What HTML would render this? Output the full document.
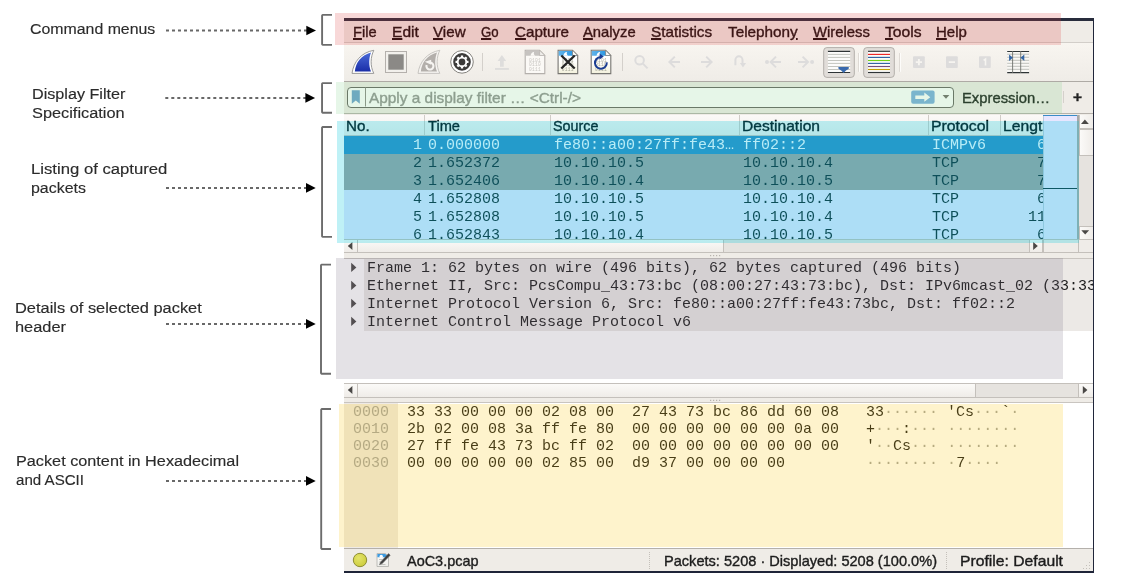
<!DOCTYPE html>
<html lang="en"><head><meta charset="utf-8"><title>Wireshark main window - annotated</title>
<style>
html,body{margin:0;padding:0;background:#fff;}
body{width:1121px;height:587px;position:relative;overflow:hidden;font-family:"Liberation Sans","DejaVu Sans",sans-serif;}
.a{position:absolute;}
.t{position:absolute;white-space:pre;transform-origin:0 50%;-webkit-text-stroke:0.380px currentColor;}
.t u{text-decoration:underline;text-decoration-thickness:1.500px;text-underline-offset:1.300px;}
#win{position:absolute;left:344px;top:18px;width:749px;height:550.300px;background:#efece7;border-top:3px solid #282c3c;border-right:1px solid #20263a;border-bottom:2px solid #1e2438;box-sizing:content-box;}
/* everything below uses page coordinates */
#menubar{left:344px;top:21px;width:749px;height:21px;background:#efece7;border-bottom:1px solid #d2cec9;}
#toolbar{left:344px;top:43px;width:749px;height:38px;background:linear-gradient(#f8f5f0,#efece7);border-bottom:1px solid #aeaaa5;}
#filterbar{left:344px;top:82px;width:749px;height:31px;background:#efece7;border-bottom:1.500px solid #b6b2ac;}
#finput{left:347px;top:87px;width:604.500px;height:18.700px;background:#fff;border:1px solid #65635f;border-radius:4px;}
#plist{left:344px;top:115px;width:699px;height:124px;background:#fff;overflow:hidden;}
#phead{left:344px;top:114.500px;width:699px;height:20.500px;background:linear-gradient(#fbf9f7,#f3f0ec);border-bottom:1px solid #c9c5c0;}
.colsep{position:absolute;top:115px;width:1px;height:20px;background:#d0ccc7;}
.row{position:absolute;left:344px;width:699px;height:18px;overflow:hidden;font-family:"Liberation Mono","DejaVu Sans Mono",monospace;font-size:15px;line-height:18px;white-space:pre;}
.row.sel{background:#308cc6;color:#f4f8ff;}
.row.g{background:#a0a0a0;color:#12272e;}
.row.b{background:#e7e6ff;color:#12272e;}
.row .c{position:absolute;top:1.800px;}
.row .no{right:621px;text-align:right;}
.row .tm{left:84px;}
.row .src{left:210px;}
.row .dst{left:399px;}
.row .pr{left:588px;}
.row .ln{right:-12px;text-align:right;}
.sb{position:absolute;background:#e6e3df;}
.btn{position:absolute;background:linear-gradient(90deg,#fbfaf8,#efece8);border:1px solid #c4c0bb;box-sizing:border-box;}
.btnh{position:absolute;background:linear-gradient(#fbfaf8,#efece8);border:1px solid #c4c0bb;box-sizing:border-box;}
.mono{font-family:"Liberation Mono","DejaVu Sans Mono",monospace;font-size:15px;white-space:pre;position:absolute;}
.ov{position:absolute;pointer-events:none;}
.mono i{font-style:normal;color:#a6a6a0;}
</style></head>
<body><div id="gl" style="position:absolute;left:0;top:0;width:1121px;height:587px;will-change:transform;">

<div id="win"></div>
<div class="a" id="menubar"></div>
<div class="a" id="toolbar"></div>
<!-- toolbar icons -->
<svg class="a" style="left:344px;top:43px" width="749" height="39" viewBox="344 43 749 39">
 <defs>
  <linearGradient id="fin" x1="0" y1="0" x2="0" y2="1"><stop offset="0" stop-color="#4a6ad8"/><stop offset="1" stop-color="#1a2ea8"/></linearGradient>
  <linearGradient id="pg" x1="0" y1="0" x2="0" y2="1"><stop offset="0" stop-color="#ffffff"/><stop offset="0.45" stop-color="#ffffff"/><stop offset="1" stop-color="#f3f1dc"/></linearGradient>
  <linearGradient id="hb" x1="0" y1="0" x2="1" y2="0"><stop offset="0" stop-color="#62b4ea"/><stop offset="1" stop-color="#1a8ee0"/></linearGradient>
 </defs>
 <!-- start capture (shark fin) -->
 <path d="M352 73.400 C353.500 62 361 52.500 373.800 50.300 C370.500 57 370 66 373.800 73.400 Z" fill="#fff" stroke="#8e8e8e" stroke-width="0.9"/>
 <path d="M354.800 71.500 C355.700 62 361.500 55 371 52.400 C368.800 58 368.500 65.500 371 71.500 Z" fill="url(#fin)"/>
 <!-- stop -->
 <rect x="385.5" y="51.5" width="21" height="21" fill="#f2f0ec" stroke="#b4b0ac" stroke-width="1"/>
 <rect x="388.3" y="54.3" width="15.4" height="15.4" fill="#8b8986"/>
 <!-- restart fin (disabled) -->
 <path d="M418 73.400 C419.500 62 427 52.500 439.800 50.300 C436.500 57 436 66 439.800 73.400 Z" fill="#f6f4f1" stroke="#c2bfbb" stroke-width="0.9"/>
 <path d="M420.800 71.500 C421.700 62 427.500 55 437 52.400 C434.800 58 434.500 65.500 437 71.500 Z" fill="#b3afab"/>
 <path d="M430.600 62.600 A3.500 3.500 0 1 1 426.600 65" fill="none" stroke="#f6f4f1" stroke-width="2.100"/>
 <path d="M424.800 61.800 L431.200 59.800 L431.200 64.800 Z" fill="#f6f4f1"/>
 <!-- options gear -->
 <circle cx="462" cy="61.900" r="11.300" fill="#fff" stroke="#77756f" stroke-width="0.9"/>
 <circle cx="462" cy="61.900" r="8.800" fill="#3c3b3a"/>
 <g fill="none" stroke="#fff">
  <circle cx="462" cy="61.900" r="4.300" stroke-width="1.900"/>
  <g stroke-width="2.300">
   <path d="M462 55.400v1.800M462 66.600v1.800M455.500 61.900h1.800M466.700 61.900h1.800M457.400 57.300l1.300 1.300M465.300 65.200l1.300 1.300M457.400 66.500l1.300-1.300M465.300 58.600l1.300-1.300"/>
  </g>
 </g>
 <!-- separator -->
 <rect x="482" y="53" width="1" height="18" fill="#d4d0cb"/>
 <!-- upload (disabled) -->
 <g fill="#dedddc">
  <path d="M501.900 55.100 L506.200 60.900 H503.750 V66.700 H500 V60.900 H497.600 Z"/>
  <rect x="495" y="68" width="13.900" height="1.900"/>
 </g>
 <!-- file icon 1 (disabled) -->
 <g>
  <path d="M525.20 50.3 H539.60 L544.80 55.50 V73.6 H525.20 Z" fill="#fbf9f6" stroke="#b4b0ac" stroke-width="1.1"/>
  <path d="M525.80 50.90 H539.40 L544.20 55.70 H525.80 Z" fill="#c6c3c0"/>
  <path d="M539.60 50.3 V55.50 H544.80 Z" fill="#efedea" stroke="#b4b0ac" stroke-width="0.7"/>
  <path d="M530.50 55.700 C530.90 53.400 532.10 52.300 534.20 51.700 C533.50 53 533.70 54.600 535.10 55.700 Z" fill="#fbf9f6"/>
  <g fill="#c8c5c1" font-family="Liberation Mono, monospace" font-size="4.600" letter-spacing="0.250">
   <text x="528.90" y="61.900">0101</text><text x="528.90" y="66.400">0110</text><text x="528.90" y="70.900">0111</text>
  </g>
 </g>
 <!-- file icon 2 (close) -->
 <g>
  <path d="M558.10 50.3 H572.50 L577.70 55.50 V73.6 H558.10 Z" fill="url(#pg)" stroke="#777672" stroke-width="1.1"/>
  <path d="M558.70 50.90 H572.30 L577.10 55.70 H558.70 Z" fill="url(#hb)"/>
  <path d="M572.50 50.3 V55.50 H577.70 Z" fill="#fbfbf8" stroke="#777672" stroke-width="0.7"/>
  <path d="M563.40 55.700 C563.80 53.400 565.00 52.300 567.10 51.700 C566.40 53 566.60 54.600 568.00 55.700 Z" fill="#ffffff"/>
  <g fill="#a9a99a" font-family="Liberation Mono, monospace" font-size="4.600" letter-spacing="0.250">
   <text x="561.80" y="61.900">0101</text><text x="561.80" y="66.400">0110</text><text x="561.80" y="70.900">0111</text>
  </g>
  <path d="M561.30 55.500 L574.70 68.500 M574.70 55.500 L561.30 68.500" stroke="#252525" stroke-width="2.300" fill="none"/>
 </g>
 <!-- file icon 3 (reload) -->
 <g>
  <path d="M591.20 50.3 H605.60 L610.80 55.50 V73.6 H591.20 Z" fill="url(#pg)" stroke="#777672" stroke-width="1.1"/>
  <path d="M591.80 50.90 H605.40 L610.20 55.70 H591.80 Z" fill="url(#hb)"/>
  <path d="M605.60 50.3 V55.50 H610.80 Z" fill="#fbfbf8" stroke="#777672" stroke-width="0.7"/>
  <path d="M596.50 55.700 C596.90 53.400 598.10 52.300 600.20 51.700 C599.50 53 599.70 54.600 601.10 55.700 Z" fill="#ffffff"/>
  <g fill="#a9a99a" font-family="Liberation Mono, monospace" font-size="4.600" letter-spacing="0.250">
   <text x="594.90" y="61.900">0101</text><text x="594.90" y="66.400">0110</text><text x="594.90" y="70.900">0111</text>
  </g>
  <path d="M606.75 62.400 A5.900 5.900 0 1 1 600.55 57" fill="none" stroke="#1b3d92" stroke-width="2"/>
  <path d="M599.65 53.500 L603.75 56.500 L599.65 59.400 Z" fill="#1b3d92"/>
 </g>
 <rect x="622" y="53" width="1" height="18" fill="#d4d0cb"/>
 <!-- search (disabled) -->
 <g fill="none" stroke="#dddcdc" stroke-width="2">
  <circle cx="639.600" cy="60.200" r="4.300"/><path d="M642.900 63.600 l4.700 4.800"/>
 </g>
 <!-- arrows (disabled) -->
 <g fill="none" stroke="#dddcdc" stroke-width="2" stroke-linejoin="miter">
  <path d="M680 62 h-10.200 M674.800 56.600 l-5.400 5.400 l5.400 5.400"/>
  <path d="M701 62 h10.200 M706.200 56.600 l5.400 5.400 l-5.400 5.400"/>
  <path d="M735.400 65.200 V59.900 a3.550 3.550 0 0 1 7.100 0 V63.500"/>
  <path d="M781 62 h-9.400 M776 56.600 l-5.400 5.400 l5.400 5.400"/>
  <path d="M798 62 h9.400 M802.600 56.600 l5.400 5.400 l-5.400 5.400"/>
 </g>
 <path d="M739.900 62.900 h6.200 l-3.100 4.600 z" fill="#dddcdc"/>
 <circle cx="767" cy="62" r="2" fill="#dddcdc"/><circle cx="812.100" cy="62" r="2" fill="#dddcdc"/>
 <!-- toggle button 1: autoscroll -->
 <rect x="823.700" y="47.600" width="30.600" height="29.800" rx="3.200" fill="#e1ddd9" stroke="#b3afaa" stroke-width="1"/>
 <rect x="827.900" y="50.800" width="22.300" height="22.200" fill="#fcfcfb"/>
 <g stroke="#c3c5bf" stroke-width="1"><path d="M827.900 54.4H850.200"/><path d="M827.900 57.4H850.200"/><path d="M827.900 60.5H850.200"/><path d="M827.900 63.4H850.200"/><path d="M827.900 66.5H850.200"/><path d="M827.900 69.5H850.200"/></g>
 <path d="M827.900 51.300H850.200M827.900 72.500H850.200" stroke="#2e3436" stroke-width="1.200"/>
 <path d="M838.100 68 Q838.100 67 839.300 67 H847.900 Q849.100 67 849.100 68 Q848.500 69.400 846 70.600 L843.600 73 L841.200 70.600 Q838.700 69.400 838.100 68 Z" fill="#3869ad"/>
 <rect x="859" y="53" width="1" height="18.800" fill="#fdfcfa"/><rect x="858" y="53" width="1" height="18.800" fill="#dedad5"/>
 <!-- toggle button 2: colorize -->
 <rect x="863.700" y="47.600" width="30.600" height="29.800" rx="3.200" fill="#e1ddd9" stroke="#b3afaa" stroke-width="1"/>
 <rect x="868" y="50.800" width="22" height="22.200" fill="#fcfcfb"/>
 <g stroke-width="1.150">
  <path d="M868 51.300H890" stroke="#2e3436"/><path d="M868 54.400H890" stroke="#ef2929"/><path d="M868 57.400H890" stroke="#3465a4"/>
  <path d="M868 60.500H890" stroke="#73d216"/><path d="M868 63.400H890" stroke="#3465a4"/><path d="M868 66.500H890" stroke="#75507b"/>
  <path d="M868 69.500H890" stroke="#c4a000"/><path d="M868 72.500H890" stroke="#2e3436"/>
 </g>
 <rect x="899" y="53" width="1" height="18.800" fill="#dedad5"/><rect x="900" y="53" width="1" height="18.800" fill="#fdfcfa"/>
 <!-- zoom buttons disabled -->
 <g fill="#dddcdc">
  <rect x="913" y="56.2" width="11.800" height="11.800" rx="1"/><rect x="946" y="56.2" width="11.800" height="11.800" rx="1"/><rect x="979" y="56.2" width="11.800" height="11.800" rx="1"/>
 </g>
 <g stroke="#f6f4f0" stroke-width="1.9" fill="none"><path d="M915.800 62.100h6.200M918.900 59v6.200M948.800 62.100h6.200"/><path d="M983.600 60.300l1.900-1.300v6.400" stroke-width="1.6"/></g>
 <!-- resize columns -->
 <g>
  <rect x="1007.200" y="51" width="21.900" height="22" fill="#f9f8f5"/>
  <g stroke="#b9bbb5" stroke-width="0.900"><path d="M1007.200 54.2H1029.100"/><path d="M1007.200 57.25H1029.100"/><path d="M1007.200 60.3H1029.100"/><path d="M1007.200 63.3H1029.100"/><path d="M1007.200 66.3H1029.100"/><path d="M1007.200 69.3H1029.100"/></g>
  <path d="M1007.200 51.500H1029.100M1007.200 72.600H1029.100" stroke="#2e3436" stroke-width="1.100"/>
  <path d="M1012.600 51v22M1020.700 51v22" stroke="#6e706c" stroke-width="0.900"/>
  <path d="M1009.100 54.600 l3.800 3.200 l-3.800 3.200 z M1024.300 54.600 l-3.800 3.200 l3.800 3.200z" fill="#3465a4"/>
   </g>
</svg>
<div class="a" id="filterbar"></div>
<div class="a" id="finput"></div>
<svg class="a" style="left:344px;top:82px" width="749" height="33" viewBox="344 82 749 33">
 <path d="M351.800 90.300 h8 v13.400 l-4 -3.300 l-4 3.300 z" fill="#6ba0cc"/>
 <rect x="365" y="87.500" width="1" height="19" fill="#8c8a86"/>
 <rect x="911.200" y="90.500" width="23.400" height="13.300" rx="2" fill="#78aede"/>
 <path d="M915.300 95.400 h9 v-2.800 l6 4.600 l-6 4.600 v-2.800 h-9 z" fill="#fff"/>
 <path d="M942.600 95 h6.800 l-3.400 3.800 z" fill="#6e6c68"/>
 <rect x="1063" y="91" width="1" height="12" fill="#d4d0cb"/>
</svg>
<!-- packet list -->
<div class="a" id="plist"></div>
<div class="a" id="phead"></div>
<div class="colsep" style="left:424px"></div><div class="colsep" style="left:550px"></div><div class="colsep" style="left:739px"></div><div class="colsep" style="left:928px"></div><div class="colsep" style="left:1000px"></div>

<div class="row sel" style="top:135.5px"><span class="c no">1</span><span class="c tm">0.000000</span><span class="c src">fe80::a00:27ff:fe43…</span><span class="c dst">ff02::2</span><span class="c pr">ICMPv6</span><span class="c ln">62</span></div>
<div class="row g" style="top:153.5px"><span class="c no">2</span><span class="c tm">1.652372</span><span class="c src">10.10.10.5</span><span class="c dst">10.10.10.4</span><span class="c pr">TCP</span><span class="c ln">74</span></div>
<div class="row g" style="top:171.5px"><span class="c no">3</span><span class="c tm">1.652406</span><span class="c src">10.10.10.4</span><span class="c dst">10.10.10.5</span><span class="c pr">TCP</span><span class="c ln">74</span></div>
<div class="row b" style="top:189.5px"><span class="c no">4</span><span class="c tm">1.652808</span><span class="c src">10.10.10.5</span><span class="c dst">10.10.10.4</span><span class="c pr">TCP</span><span class="c ln">66</span></div>
<div class="row b" style="top:207.5px"><span class="c no">5</span><span class="c tm">1.652808</span><span class="c src">10.10.10.5</span><span class="c dst">10.10.10.4</span><span class="c pr">TCP</span><span class="c ln">117</span></div>
<div class="row b" style="top:225.5px"><span class="c no">6</span><span class="c tm">1.652843</span><span class="c src">10.10.10.4</span><span class="c dst">10.10.10.5</span><span class="c pr">TCP</span><span class="c ln">66</span></div>
<!-- minimap -->
<div class="a" style="left:1043px;top:115px;width:35px;height:124px;background:#e7e6ff;"></div>
<div class="a" style="left:1043px;top:114.800px;width:34px;height:1.400px;background:#3a8cc8;"></div>
<div class="a" style="left:1042.500px;top:116px;width:1px;height:123px;background:rgba(60,120,130,0.25);"></div>
<div class="a" style="left:1077px;top:115px;width:1.500px;height:124px;background:#a8a8a8;"></div>
<div class="a" style="left:1043px;top:188px;width:34px;height:1px;background:#12333c;"></div>
<!-- v scrollbar of packet list -->
<div class="sb" style="left:1078.500px;top:115px;width:14.500px;height:125px;"></div>
<div class="btn" style="left:1078.500px;top:115px;width:14.500px;height:14px;border-top:none;border-right:none;"></div>
<div class="btn" style="left:1078.500px;top:128.500px;width:14.500px;height:27px;border-right:none;"></div>
<div class="btn" style="left:1078.500px;top:225.500px;width:14.500px;height:14px;border-right:none;"></div>
<!-- h scrollbar of packet list -->
<div class="sb" style="left:344px;top:239px;width:749px;height:14.300px;border-top:1px solid #c4c0bb;border-bottom:1px solid #c4c0bb;box-sizing:border-box;"></div>
<div class="btnh" style="left:344px;top:239px;width:13.500px;height:14.300px;border-left:none;"></div>
<div class="btnh" style="left:357px;top:239px;width:366.500px;height:14.300px;"></div>
<div class="btnh" style="left:1028.500px;top:239px;width:14.500px;height:14.300px;"></div>
<div class="a" style="left:1043px;top:239px;width:35.500px;height:14.300px;background:#efece8;border:1px solid #c4c0bb;box-sizing:border-box;"></div>
<div class="a" style="left:1078px;top:239px;width:15px;height:14.300px;background:#efece8;border:1px solid #c4c0bb;border-right:none;box-sizing:border-box;"></div>
<!-- splitter 1 -->
<div class="a" style="left:344px;top:253px;width:749px;height:5px;background:#efece7;"></div>
<!-- details pane -->
<div class="a" style="left:344px;top:258px;width:749px;height:125px;background:#fff;border-top:1px solid #c9c5c0;box-sizing:border-box;"></div>
<div class="a" style="left:364px;top:259px;width:729px;height:72px;background:#ece9e6;"></div>
<div class="mono" style="left:344px;top:260.400px;width:749px;height:72px;line-height:18px;color:#1c1c1c;overflow:hidden;">
<span class="a" style="left:23px;top:0">Frame 1: 62 bytes on wire (496 bits), 62 bytes captured (496 bits)</span>
<span class="a" style="left:23px;top:18px">Ethernet II, Src: PcsCompu_43:73:bc (08:00:27:43:73:bc), Dst: IPv6mcast_02 (33:33:00:00:00:02)</span>
<span class="a" style="left:23px;top:36px">Internet Protocol Version 6, Src: fe80::a00:27ff:fe43:73bc, Dst: ff02::2</span>
<span class="a" style="left:23px;top:54px">Internet Control Message Protocol v6</span>
</div>
<!-- h scrollbar of details -->
<div class="sb" style="left:344px;top:383px;width:749px;height:14.500px;border-top:1px solid #c4c0bb;border-bottom:1px solid #c4c0bb;box-sizing:border-box;"></div>
<div class="btnh" style="left:344px;top:383px;width:13.500px;height:14.500px;border-left:none;"></div>
<div class="btnh" style="left:357px;top:383px;width:618.500px;height:14.500px;"></div>
<div class="btnh" style="left:1078px;top:383px;width:15px;height:14.500px;border-right:none;"></div>
<!-- splitter 2 -->
<div class="a" style="left:344px;top:397.500px;width:749px;height:6px;background:#efece7;"></div>
<!-- hex pane -->
<div class="a" style="left:344px;top:402px;width:749px;height:147px;background:#fff;border-top:1px solid #c9c5c0;border-bottom:1px solid #b4b0ab;box-sizing:border-box;"></div>
<div class="a" style="left:344px;top:403px;width:54px;height:145px;background:#eeeae6;"></div>
<div class="mono" style="left:344px;top:403.800px;width:749px;height:70px;line-height:17px;color:#1c1c1c;">
<span class="a" style="left:9px;top:0;color:#a4a4a4">0000</span><span class="a" style="left:63px;top:0">33 33 00 00 00 02 08 00  27 43 73 bc 86 dd 60 08   33<i>······</i> 'Cs<i>···</i>`<i>·</i></span>
<span class="a" style="left:9px;top:17px;color:#a4a4a4">0010</span><span class="a" style="left:63px;top:17px">2b 02 00 08 3a ff fe 80  00 00 00 00 00 00 0a 00   +<i>···</i>:<i>···</i> <i>········</i></span>
<span class="a" style="left:9px;top:34px;color:#a4a4a4">0020</span><span class="a" style="left:63px;top:34px">27 ff fe 43 73 bc ff 02  00 00 00 00 00 00 00 00   '<i>··</i>Cs<i>···</i> <i>········</i></span>
<span class="a" style="left:9px;top:51px;color:#a4a4a4">0030</span><span class="a" style="left:63px;top:51px">00 00 00 00 00 02 85 00  d9 37 00 00 00 00         <i>········</i> <i>·</i>7<i>····</i></span>
</div>
<!-- status bar -->
<div class="a" style="left:344px;top:549px;width:749px;height:22px;background:#efece7;"></div>
<svg class="a" style="left:344px;top:115px" width="749" height="458" viewBox="344 115 749 458">
 <defs><radialGradient id="yl" cx="0.4" cy="0.35" r="0.7"><stop offset="0" stop-color="#e4e46a"/><stop offset="1" stop-color="#cccc3c"/></radialGradient>
 <linearGradient id="pg2" x1="0" y1="0" x2="0" y2="1"><stop offset="0" stop-color="#ffffff"/><stop offset="1" stop-color="#eeeeea"/></linearGradient></defs>
 <!-- scroll arrows -->
 <g fill="#4a4846">
  <path d="M1081 124 h7.800 l-3.900 -4.400 z"/>
  <path d="M1081.300 230.200 h7.800 l-3.900 4.300 z"/>
  <path d="M352.400 242 v8 l-4.600 -4 z"/>
  <path d="M1033.200 242 v8 l4.600 -4 z"/>
  <path d="M352.400 386 v8 l-4.600 -4 z"/>
  <path d="M1082.800 386 v8 l4.600 -4 z"/>
  <!-- tree expanders -->
  <path d="M351.200 262.8 v9.200 l5.200 -4.600 z"/><path d="M351.200 280.8 v9.200 l5.200 -4.600 z"/><path d="M351.200 298.8 v9.200 l5.200 -4.600 z"/><path d="M351.200 316.8 v9.200 l5.200 -4.600 z"/>
 </g>
 <!-- splitter dots -->
 <g fill="#b8b4ae"><rect x="710" y="255" width="1.200" height="1.200"/><rect x="713" y="255" width="1.200" height="1.200"/><rect x="716" y="255" width="1.200" height="1.200"/><rect x="719" y="255" width="1.200" height="1.200"/>
 <rect x="710" y="399.800" width="1.200" height="1.200"/><rect x="713" y="399.800" width="1.200" height="1.200"/><rect x="716" y="399.800" width="1.200" height="1.200"/><rect x="719" y="399.800" width="1.200" height="1.200"/></g>
 <!-- status icons -->
 <circle cx="360" cy="560" r="6.700" fill="url(#yl)" stroke="#85852c" stroke-width="0.9"/>
 <g>
  <path d="M377 553.500 h8.500 l3 3 v10 h-11.500 z" fill="url(#pg2)" stroke="#b0b0ac" stroke-width="0.8"/>
  <path d="M377.400 553.900 h8 l1.600 1.600 v1.800 h-9.600 z" fill="#3d9be0"/>
  <circle cx="381.200" cy="556.400" r="1.700" fill="#fff"/>
  <path d="M379 559.500h3.500M379 562h2M379 564.500h6.500" stroke="#b9b9b4" stroke-width="0.800"/>
  <path d="M388.600 553.600 l1.600 1.600 l-8 8.400 l-2.600 1 l1 -2.600 z" fill="#3c3c3c" stroke="#666" stroke-width="0.600"/>
 </g>
 <g fill="#c4c0ba"><rect x="649" y="552" width="1" height="1"/><rect x="649" y="554" width="1" height="1"/><rect x="649" y="556" width="1" height="1"/><rect x="649" y="558" width="1" height="1"/><rect x="649" y="560" width="1" height="1"/><rect x="649" y="562" width="1" height="1"/><rect x="649" y="564" width="1" height="1"/><rect x="649" y="566" width="1" height="1"/><rect x="649" y="568" width="1" height="1"/>
 <rect x="946" y="552" width="1" height="1"/><rect x="946" y="554" width="1" height="1"/><rect x="946" y="556" width="1" height="1"/><rect x="946" y="558" width="1" height="1"/><rect x="946" y="560" width="1" height="1"/><rect x="946" y="562" width="1" height="1"/><rect x="946" y="564" width="1" height="1"/><rect x="946" y="566" width="1" height="1"/><rect x="946" y="568" width="1" height="1"/>
 <rect x="1089" y="562" width="1" height="1"/><rect x="1089" y="565" width="1" height="1"/><rect x="1089" y="568" width="1" height="1"/><rect x="1086" y="565" width="1" height="1"/><rect x="1086" y="568" width="1" height="1"/><rect x="1083" y="568" width="1" height="1"/></g>
</svg>

<span class="t" id="t0" style="left:30.2px;top:18.5px;font-size:15.5px;line-height:20px;color:#2b2b2b;transform:scaleX(1.0243);-webkit-text-stroke:0.150px currentColor;">Command menus</span>
<span class="t" id="t1" style="left:31.6px;top:83.5px;font-size:15.5px;line-height:20px;color:#2b2b2b;transform:scaleX(1.0427);-webkit-text-stroke:0.150px currentColor;">Display Filter</span>
<span class="t" id="t2" style="left:31.9px;top:102.5px;font-size:15.5px;line-height:20px;color:#2b2b2b;transform:scaleX(1.0536);-webkit-text-stroke:0.150px currentColor;">Specification</span>
<span class="t" id="t3" style="left:30.6px;top:158.5px;font-size:15.5px;line-height:20px;color:#2b2b2b;transform:scaleX(1.0768);-webkit-text-stroke:0.150px currentColor;">Listing of captured</span>
<span class="t" id="t4" style="left:30.6px;top:177.5px;font-size:15.5px;line-height:20px;color:#2b2b2b;transform:scaleX(1.0295);-webkit-text-stroke:0.150px currentColor;">packets</span>
<span class="t" id="t5" style="left:14.7px;top:297.5px;font-size:15.5px;line-height:20px;color:#2b2b2b;transform:scaleX(1.0576);-webkit-text-stroke:0.150px currentColor;">Details of selected packet</span>
<span class="t" id="t6" style="left:14.7px;top:316.5px;font-size:15.5px;line-height:20px;color:#2b2b2b;transform:scaleX(1.0567);-webkit-text-stroke:0.150px currentColor;">header</span>
<span class="t" id="t7" style="left:15.6px;top:450.5px;font-size:15.5px;line-height:20px;color:#2b2b2b;transform:scaleX(1.0479);-webkit-text-stroke:0.150px currentColor;">Packet content in Hexadecimal</span>
<span class="t" id="t8" style="left:15.8px;top:469.5px;font-size:15.5px;line-height:20px;color:#2b2b2b;transform:scaleX(0.9743);-webkit-text-stroke:0.150px currentColor;">and ASCII</span>
<span class="t" id="t9" style="left:353.4px;top:21.5px;font-size:15px;line-height:20px;color:#140c0c;transform:scaleX(0.9757);"><u>F</u>ile</span>
<span class="t" id="t10" style="left:391.7px;top:21.5px;font-size:15px;line-height:20px;color:#140c0c;transform:scaleX(1.0364);"><u>E</u>dit</span>
<span class="t" id="t11" style="left:433.4px;top:21.5px;font-size:15px;line-height:20px;color:#140c0c;transform:scaleX(1.0109);"><u>V</u>iew</span>
<span class="t" id="t12" style="left:481.4px;top:21.5px;font-size:15px;line-height:20px;color:#140c0c;transform:scaleX(0.8793);"><u>G</u>o</span>
<span class="t" id="t13" style="left:514.5px;top:21.5px;font-size:15px;line-height:20px;color:#140c0c;transform:scaleX(1.0114);"><u>C</u>apture</span>
<span class="t" id="t14" style="left:583.4px;top:21.5px;font-size:15px;line-height:20px;color:#140c0c;transform:scaleX(0.9855);"><u>A</u>nalyze</span>
<span class="t" id="t15" style="left:651.2px;top:21.5px;font-size:15px;line-height:20px;color:#140c0c;transform:scaleX(1.0178);"><u>S</u>tatistics</span>
<span class="t" id="t16" style="left:728.3px;top:21.5px;font-size:15px;line-height:20px;color:#140c0c;transform:scaleX(1.0191);">Telephon<u>y</u></span>
<span class="t" id="t17" style="left:813.4px;top:21.5px;font-size:15px;line-height:20px;color:#140c0c;transform:scaleX(0.9890);"><u>W</u>ireless</span>
<span class="t" id="t18" style="left:885px;top:21.5px;font-size:15px;line-height:20px;color:#140c0c;transform:scaleX(1.0448);"><u>T</u>ools</span>
<span class="t" id="t19" style="left:936.4px;top:21.5px;font-size:15px;line-height:20px;color:#140c0c;transform:scaleX(0.9976);"><u>H</u>elp</span>
<span class="t" id="t20" style="left:369px;top:87.5px;font-size:15px;line-height:20px;color:#909290;transform:scaleX(1.0254);">Apply a display filter … &lt;Ctrl-/&gt;</span>
<span class="t" id="t21" style="left:962.2px;top:88.3px;font-size:15px;line-height:20px;color:#141a14;transform:scaleX(0.9865);">Expression…</span>
<span class="t" id="t22" style="left:1072.5px;top:86.5px;font-size:15px;line-height:20px;color:#222;transform:scaleX(1.0267);font-weight:bold;">+</span>
<span class="t" id="t23" style="left:345.5px;top:115.5px;font-size:15px;line-height:20px;color:#00080c;transform:scaleX(1.0110);">No.</span>
<span class="t" id="t24" style="left:427.8px;top:115.5px;font-size:15px;line-height:20px;color:#00080c;transform:scaleX(0.9762);">Time</span>
<span class="t" id="t25" style="left:553.3px;top:115.5px;font-size:15px;line-height:20px;color:#00080c;transform:scaleX(0.9573);">Source</span>
<span class="t" id="t26" style="left:742.2px;top:115.5px;font-size:15px;line-height:20px;color:#00080c;transform:scaleX(1.0394);">Destination</span>
<span class="t" id="t27" style="left:931px;top:115.5px;font-size:15px;line-height:20px;color:#00080c;transform:scaleX(1.0539);">Protocol</span>
<div class="a" style="left:1002.6px;top:115.5px;width:40.4px;height:20px;overflow:hidden;"><span class="t" id="t28" style="left:0;top:0;font-size:15px;line-height:20px;color:#00080c;transform:scaleX(1.0460);">Length</span></div>
<span class="t" id="t29" style="left:407.3px;top:551.0px;font-size:15px;line-height:20px;color:#1c1c1c;transform:scaleX(0.9634);">AoC3.pcap</span>
<span class="t" id="t30" style="left:664.4px;top:551.0px;font-size:15px;line-height:20px;color:#1c1c1c;transform:scaleX(0.9715);">Packets: 5208 · Displayed: 5208 (100.0%)</span>
<span class="t" id="t31" style="left:960.4px;top:551.0px;font-size:15px;line-height:20px;color:#1c1c1c;transform:scaleX(1.0468);">Profile: Default</span>
<!-- coloured highlight overlays -->
<div class="ov" style="left:335px;top:13px;width:726px;height:31.500px;background:rgba(222,60,60,0.2);"></div>
<div class="ov" style="left:336px;top:82px;width:726px;height:31.700px;background:rgba(130,210,140,0.2);"></div>
<div class="ov" style="left:337px;top:121px;width:741.500px;height:121.500px;background:rgba(0,200,220,0.25);"></div>
<div class="ov" style="left:336px;top:258px;width:727px;height:120.700px;background:rgba(120,110,130,0.2);"></div>
<div class="ov" style="left:339px;top:403.500px;width:724px;height:143.500px;background:rgba(250,195,0,0.2);"></div>
<!-- annotation arrows + brackets -->
<svg class="ov" style="left:0;top:0" width="345" height="587" viewBox="0 0 345 587">
 <g stroke="#686868" stroke-width="2" stroke-dasharray="3 3" fill="none">
  <path d="M166 30.5H307.3"/><path d="M165.3 97.9H306.4"/><path d="M166 187.9H307.0"/><path d="M166 323.9H307.0"/><path d="M166 480.9H307.0"/>
 </g>
 <g fill="#000">
  <path d="M306.3 25.7 L316.0 30.5 L306.3 35.3Z"/><path d="M305.4 93.1 L315.1 97.9 L305.4 102.7Z"/><path d="M306.0 183.1 L315.7 187.9 L306.0 192.7Z"/><path d="M306.0 319.1 L315.7 323.9 L306.0 328.7Z"/><path d="M306.0 476.1 L315.7 480.9 L306.0 485.7Z"/>
 </g>
 <g stroke="#6c6c6c" stroke-width="1.900" fill="none" stroke-linejoin="bevel">
  <path d="M332 14.9 H322.70 L322.1 15.5 V44.3 L322.70 44.9 H332"/>
  <path d="M332 83.1 H322.65 L322.05 83.7 V112.2 L322.65 112.8 H332"/>
  <path d="M332 127 H322.65 L322.05 127.6 V236.3 L322.65 236.9 H332"/>
  <path d="M331 264.6 H321.60 L321 265.2 V373.2 L321.60 373.8 H331"/>
  <path d="M331 409 H321.80 L321.2 409.6 V548.4 L321.80 549 H331"/>
 </g>
</svg>

</div></body></html>
